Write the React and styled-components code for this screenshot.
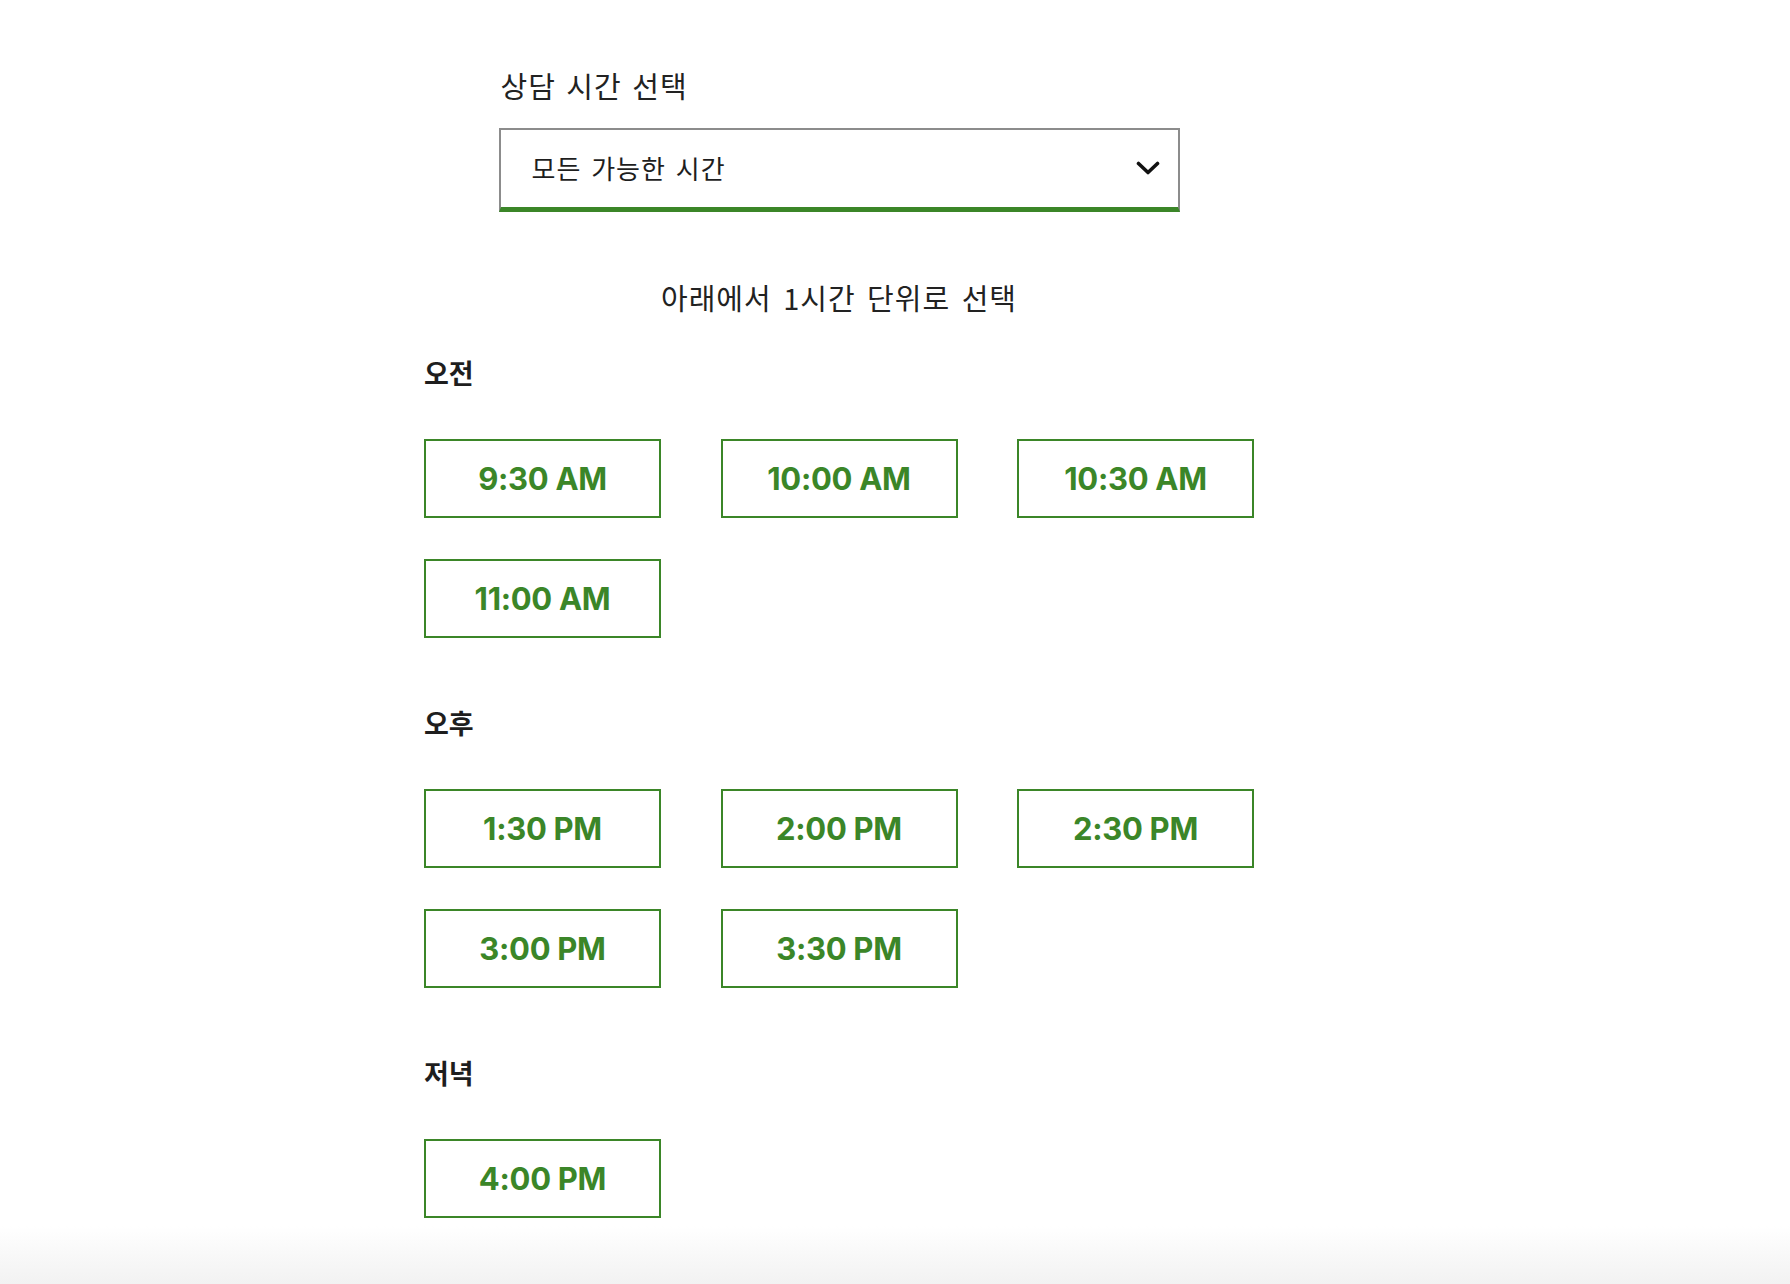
import React from 'react'
import styled, { createGlobalStyle } from 'styled-components'

const GREEN = '#3b8628'

const GlobalStyle = createGlobalStyle`
  html, body {
    margin: 0;
    padding: 0;
    background: #fff;
  }
  body {
    font-family: "Noto Sans CJK KR", "Noto Sans", sans-serif;
    color: #1e1e1e;
  }
`

const Page = styled.div`
  min-height: 100vh;
  box-sizing: border-box;
  padding: 69px 0 40px 424px;
  background: linear-gradient(
    to bottom,
    #fff 0,
    #fff calc(100% - 58px),
    #f2f2f2 100%
  );
`

const Content = styled.div`
  width: 830px;
  display: flex;
  flex-direction: column;
`

const Field = styled.div`
  width: 681px;
  margin: 0 auto;
  display: flex;
  flex-direction: column;
`

const Label = styled.label`
  font-size: 29px;
  line-height: 32px;
  font-weight: 400;
  letter-spacing: 1px;
  word-spacing: 3px;
  color: #222;
  margin: 0 0 27px 2px;
`

const SelectBox = styled.div`
  height: 84px;
  box-sizing: border-box;
  border: 2px solid #8c8c8c;
  border-bottom: 5px solid ${GREEN};
  display: flex;
  align-items: center;
  justify-content: space-between;
  padding: 0 18px 0 31px;
  cursor: pointer;
`

const SelectValue = styled.span`
  font-size: 26px;
  letter-spacing: 1px;
  word-spacing: 3px;
  color: #1e1e1e;
  margin-top: -3px;
`

const Hint = styled.p`
  margin: 69px 0 0;
  font-size: 29px;
  line-height: 32px;
  letter-spacing: 1px;
  word-spacing: 4px;
  text-align: center;
  color: #222;
`

const Section = styled.section`
  margin-top: ${(p) => (p.$first ? 44 : 69)}px;
`

const Heading = styled.h3`
  margin: 0 0 50px;
  font-size: 27px;
  line-height: 32px;
  font-weight: 700;
  color: #1e1e1e;
`

const SlotGrid = styled.div`
  display: grid;
  grid-template-columns: repeat(3, 237px);
  column-gap: 59.5px;
  row-gap: 41px;
`

const Slot = styled.button`
  height: 79px;
  box-sizing: border-box;
  border: 2px solid ${GREEN};
  background: #fff;
  color: ${GREEN};
  font-family: Inter, "Liberation Sans", sans-serif;
  font-weight: 700;
  font-size: 31px;
  letter-spacing: -0.3px;
  cursor: pointer;
  padding: 0;
`

const Chevron = () => (
  <svg width="24" height="15" viewBox="0 0 24 15" fill="none">
    <polyline
      points="2.5,2.5 12,11.5 21.5,2.5"
      stroke="#111"
      strokeWidth="3.6"
      strokeLinecap="round"
      strokeLinejoin="round"
    />
  </svg>
)

const sections = [
  { title: '오전', slots: ['9:30 AM', '10:00 AM', '10:30 AM', '11:00 AM'] },
  { title: '오후', slots: ['1:30 PM', '2:00 PM', '2:30 PM', '3:00 PM', '3:30 PM'] },
  { title: '저녁', slots: ['4:00 PM'] },
]

const App = () => (
  <>
    <GlobalStyle />
    <Page>
      <Content>
        <Field>
          <Label>상담 시간 선택</Label>
          <SelectBox>
            <SelectValue>모든 가능한 시간</SelectValue>
            <Chevron />
          </SelectBox>
        </Field>
        <Hint>아래에서 1시간 단위로 선택</Hint>
        {sections.map((s, i) => (
          <Section key={s.title} $first={i === 0}>
            <Heading>{s.title}</Heading>
            <SlotGrid>
              {s.slots.map((t) => (
                <Slot key={t}>{t}</Slot>
              ))}
            </SlotGrid>
          </Section>
        ))}
      </Content>
    </Page>
  </>
)

export default App
